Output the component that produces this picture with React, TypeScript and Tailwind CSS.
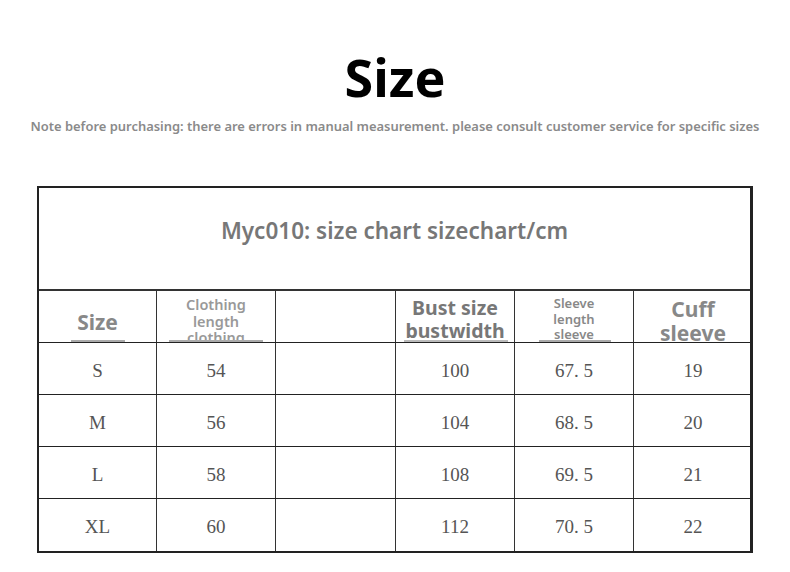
import React from "react";

const rows = [
  ["S", "54", "", "100", "67. 5", "19"],
  ["M", "56", "", "104", "68. 5", "20"],
  ["L", "58", "", "108", "69. 5", "21"],
  ["XL", "60", "", "112", "70. 5", "22"],
];

export default function App() {
  return (
    <div className="w-[790px] h-[572px] bg-white flex flex-col items-center overflow-hidden" style={{ fontFamily: '"Noto Sans", "Open Sans", sans-serif' }}>
      <div className="mt-[51px] h-[52px] leading-[52px] text-[52px] font-bold text-black">Size</div>
      <div className="mt-[15px] h-[16px] leading-[16px] text-[12.95px] font-semibold text-[#8a8a8a] whitespace-nowrap">
        Note before purchasing: there are errors in manual measurement. please consult customer service for specific sizes
      </div>
      <div className="mt-[52px] w-[716px] border-2 border-[#222] border-r-[3px]">
        <div className="h-[103px] flex items-center justify-center pb-[15px] text-[22.5px] font-semibold text-[#777] border-b-2 border-[#333]">
          Myc010: size chart sizechart/cm
        </div>
        <div className="grid grid-cols-[118px_119px_120px_119px_119px_118px] h-[52px] border-b-[1.5px] border-[#222]">
          <div className="relative flex items-center justify-center border-r-[1.5px] border-[#333] overflow-hidden">
            <span className="text-[21px] font-bold text-[#888] mt-[12px]">Size</span>
            <div className="absolute left-[32px] w-[54px] bottom-[0px] h-[2px] bg-[#aaa]" />
          </div>
          <div className="relative flex flex-col items-center justify-start border-r-[1.5px] border-[#333] overflow-hidden text-[14.5px] font-semibold text-[#999] leading-[16.5px] pt-[5px]">
            <span>Clothing</span>
            <span>length</span>
            <span>clothing</span>
            <div className="absolute left-[12px] w-[94px] bottom-[0px] h-[2px] bg-[#aaa]" />
          </div>
          <div className="border-r-[1.5px] border-[#333]" />
          <div className="relative flex flex-col items-center justify-start border-r-[1.5px] border-[#333] overflow-hidden text-[19.5px] font-bold text-[#777] leading-[23px] pt-[5px]">
            <span>Bust size</span>
            <span>bustwidth</span>
            <div className="absolute left-[8px] w-[104px] bottom-[0px] h-[2px] bg-[#bbb]" />
          </div>
          <div className="relative flex flex-col items-center justify-start border-r-[1.5px] border-[#333] overflow-hidden text-[13px] font-semibold text-[#888] leading-[15.5px] pt-[5px]">
            <span>Sleeve</span>
            <span>length</span>
            <span>sleeve</span>
            <div className="absolute left-[24px] w-[72px] bottom-[0px] h-[2px] bg-[#aaa]" />
          </div>
          <div className="relative flex flex-col items-center justify-start overflow-hidden text-[21px] font-bold text-[#888] leading-[24px] pt-[6px]">
            <span>Cuff</span>
            <span>sleeve</span>
          </div>
        </div>
        {rows.map((r, i) => (
          <div
            key={i}
            className={`grid grid-cols-[118px_119px_120px_119px_119px_118px] h-[52px] ${i < rows.length - 1 ? "border-b-[1.5px] border-[#222]" : ""}`}
          >
            {r.map((c, j) => (
              <div
                key={j}
                className={`flex items-center justify-center pt-[5px] text-[19px] text-[#555] whitespace-pre ${j < 5 ? "border-r-[1.5px] border-[#333]" : ""}`}
                style={{ fontFamily: '"Liberation Serif", "DejaVu Serif", serif' }}
              >
                {c}
              </div>
            ))}
          </div>
        ))}
      </div>
    </div>
  );
}
